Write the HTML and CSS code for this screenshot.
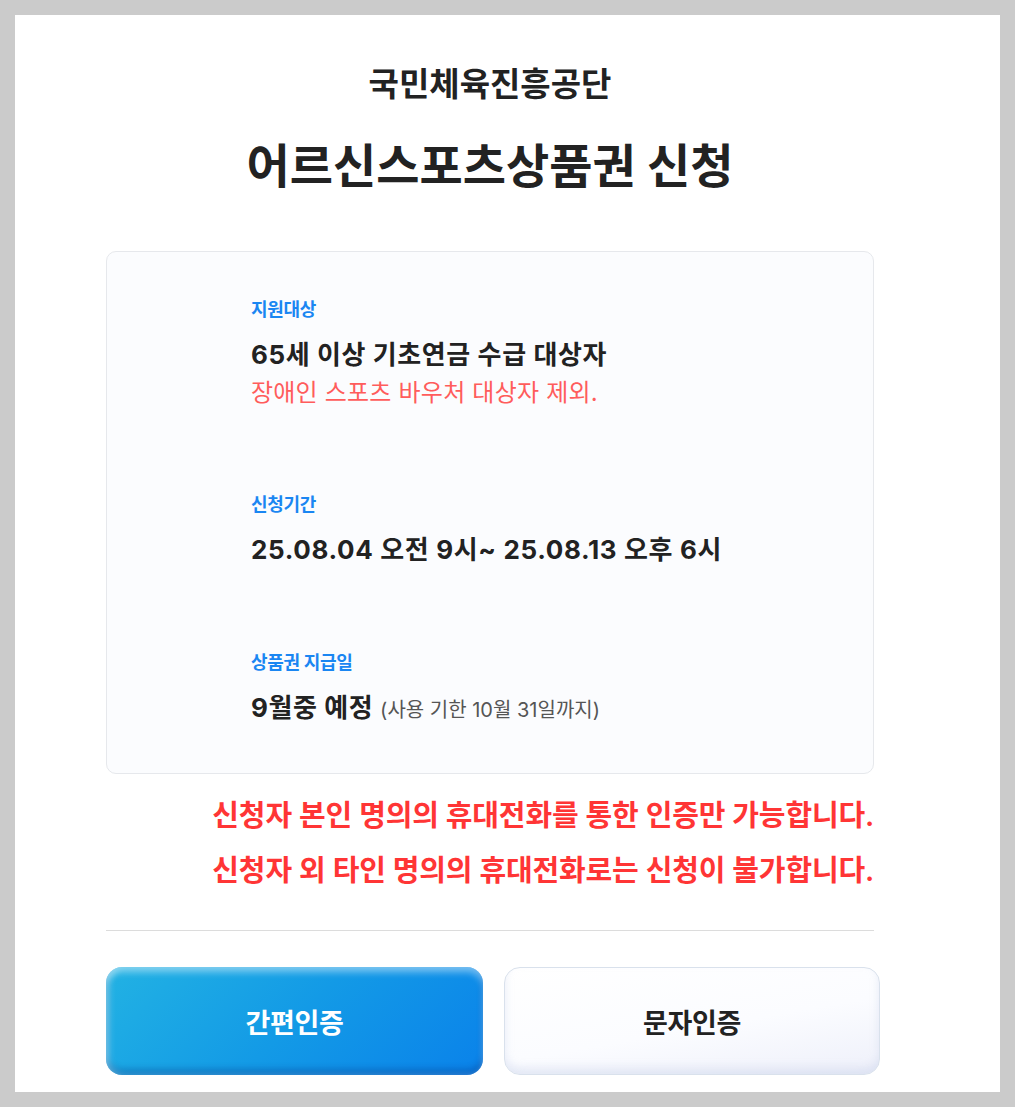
FILE: index.html
```html
<!DOCTYPE html>
<html lang="ko">
<head>
<meta charset="utf-8">
<title>어르신스포츠상품권 신청</title>
<link rel="stylesheet" href="styles.css">
</head>
<body>
<div class="panel">
  <div class="wrap">
    <header class="head">
      <div class="org">국민체육진흥공단</div>
      <h1 class="title">어르신스포츠상품권 신청</h1>
    </header>
    <section class="card">
      <div class="item">
        <div class="label">지원대상</div>
        <div class="value">65세 이상 기초연금 수급 대상자</div>
        <div class="except">장애인 스포츠 바우처 대상자 제외.</div>
      </div>
      <div class="item">
        <div class="label">신청기간</div>
        <div class="value value-date">25.08.04 오전 9시~ 25.08.13 오후 6시</div>
      </div>
      <div class="item">
        <div class="label">상품권 지급일</div>
        <div class="value">9월중 예정 <span class="sub">(사용 기한 10월 31일까지)</span></div>
      </div>
    </section>
    <div class="notes">
      <p>신청자 본인 명의의 휴대전화를 통한 인증만 가능합니다.</p>
      <p>신청자 외 타인 명의의 휴대전화로는 신청이 불가합니다.</p>
    </div>
    <hr class="divider">
    <div class="buttons">
      <button class="btn btn-blue" type="button">간편인증</button>
      <button class="btn btn-white" type="button">문자인증</button>
    </div>
  </div>
</div>
</body>
</html>
```
FILE: styles.css
```css
html, body {
  margin: 0;
  padding: 0;
}
body {
  background: #cbcbcb;
  padding: 15px;
  font-family: Inter, "Noto Sans CJK KR", sans-serif;
  color: #222;
}
.panel {
  background: #fff;
  height: 1077px;
  overflow: hidden;
  padding: 0 126px 0 91px;
}
.wrap {
  width: 768px;
}
.head {
  text-align: center;
  padding-top: 49px;
}
.org {
  font-size: 33px;
  line-height: 40px;
  font-weight: 700;
  letter-spacing: 0;
}
.title {
  margin: 32px 0 0;
  font-size: 47px;
  line-height: 60px;
  font-weight: 700;
  letter-spacing: 0;
}
.card {
  margin-top: 55px;
  border: 1px solid #e6e8ec;
  border-radius: 10px;
  background: #fbfcfe;
  padding: 47px 30px 46px 144px;
}
.item + .item {
  margin-top: 85px;
}
.label {
  font-size: 18px;
  line-height: 22px;
  font-weight: 700;
  color: #1a86f2;
  letter-spacing: -0.3px;
}
.value {
  margin-top: 17px;
  font-size: 26px;
  line-height: 34px;
  font-weight: 700;
  letter-spacing: 0.6px;
  color: #222;
}
.value-date {
  letter-spacing: 0.65px;
}
.sub {
  font-size: 20px;
  font-weight: 400;
  color: #555;
  letter-spacing: 0;
}
.except {
  margin-top: 5px;
  font-size: 24px;
  line-height: 32px;
  font-weight: 400;
  color: #ff5c5c;
  letter-spacing: 0.2px;
}
.notes {
  margin-top: 14px;
  text-align: right;
  color: #ff3535;
  font-size: 29px;
  font-weight: 600;
  letter-spacing: -0.17px;
}
.notes p {
  margin: 0;
  line-height: 55px;
}
.divider {
  margin: 32px 0 0;
  border: 0;
  border-top: 1px solid #dcdcdc;
  height: 0;
}
.buttons {
  margin-top: 36px;
  width: 774px;
  display: grid;
  grid-template-columns: 377px 376px;
  gap: 21px;
}
.btn {
  height: 108px;
  border-radius: 16px;
  font-family: Inter, "Noto Sans CJK KR", sans-serif;
  font-size: 27px;
  font-weight: 700;
  letter-spacing: -0.3px;
  cursor: pointer;
}
.btn-blue {
  border: 0;
  color: #fff;
  background: linear-gradient(135deg, #22b2e3 0%, #139ae6 50%, #0a82ea 100%);
  box-shadow: inset 0 6px 6px rgba(255,255,255,0.35), inset 4px 0 6px rgba(255,255,255,0.25), inset 0 -6px 6px rgba(0,40,120,0.3);
}
.btn-white {
  border: 1px solid #d9e1ec;
  color: #222;
  background: linear-gradient(170deg, #ffffff 0%, #fbfcff 55%, #eef0fa 100%);
  box-shadow: inset 0 -6px 8px rgba(190,200,230,0.35);
}
```
